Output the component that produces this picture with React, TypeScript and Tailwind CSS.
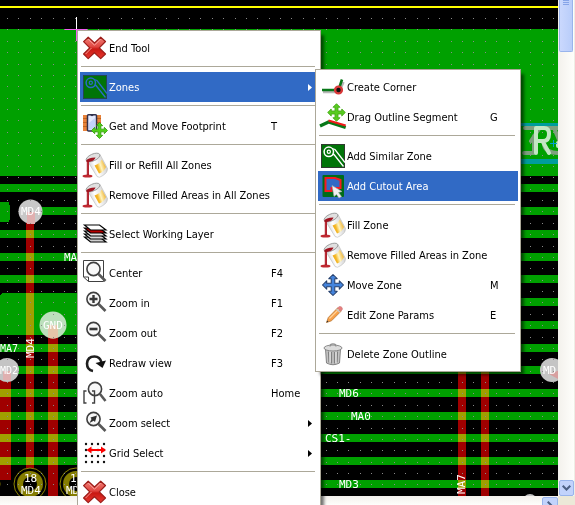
import type { ReactNode } from "react";

/* ---------- circuit board canvas ---------- */

const PITCH = 11.375;
const GREEN = "#00a000";
const RED = "#a00000";

function PadText({ x, y, size = 11, children, vertical = false, fill = "#fff" }: { x: number; y: number; size?: number; children: ReactNode; vertical?: boolean; fill?: string }) {
  return (
    <text x={x} y={y} fontSize={size} fill={fill} fontFamily="'DejaVu Sans Mono', monospace" transform={vertical ? `rotate(-90 ${x} ${y})` : undefined}>
      {children}
    </text>
  );
}

function Board() {
  const dots: ReactNode[] = [];
  for (let i = 0; i < 49; i++) {
    for (let j = 0; j < 43; j++) {
      dots.push(<rect key={`${i}-${j}`} x={Math.round(7 + i * PITCH)} y={Math.round(18 + j * PITCH)} width="1" height="1" />);
    }
  }
  const shared = [184, 230, 253, 275, 366, 389, 412, 434, 457];
  return (
    <svg className="block h-full w-full bg-black" aria-label="Circuit board" shapeRendering="crispEdges">
      <rect y="6" width="100%" height="2" fill="#ffff00" />
      <g fill={GREEN}>
        <rect y="29" width="100%" height="147" />
        {shared.map((y) => (
          <rect key={y} y={y} width="100%" height="8" />
        ))}
        <rect x="30" y="207" width="100%" height="8" />
        <path d="M0 202H9V205H10V220H9V222H0Z" />
        <path d="M2 293H300V335H0V295Z" />
        <rect y="344" width="100%" height="8" />
        <rect x="300" y="298" width="100%" height="8" />
        <rect x="300" y="321" width="100%" height="8" />
        <rect x="300" y="480" width="100%" height="8" />
      </g>
      <g fill={RED} className="mix-blend-screen">
        <rect x="26" y="212" width="8" height="258" />
        <rect x="48" y="325" width="10" height="171" />
        <rect x="0" y="370" width="11" height="110" />
        <rect x="458" y="340" width="8" height="156" />
        <rect x="481" y="340" width="8" height="156" />
      </g>
      <g shapeRendering="auto">
        {[-16, 30, 76].map((x) => (
          <g key={x}>
            <circle cx={x} cy="484" r="16" fill="#000" stroke="#8c8400" />
            <circle cx={x} cy="484" r="13" fill="#847c00" />
            <circle cx={x} cy="484" r="7" fill="#000" />
          </g>
        ))}
        <circle cx="30.500" cy="211.500" r="12" fill="#c8c8c8" />
        <rect x="27" y="212" width="8" height="12" fill="#e0b0b0" />
        <circle cx="53" cy="325" r="13.500" fill="#bcdfbc" />
        <path d="M48 325H58V337Q53 340 48 337Z" fill="#e5c5a8" />
        <circle cx="7" cy="370" r="12" fill="#c4c4c4" />
        <path d="M3 371H11V380H3Z" fill="#e0b0b0" />
        <circle cx="552" cy="370" r="12" fill="#c4c4c4" />
        <path d="M549 374L560 370V380Z" fill="#d8a0a0" />
        <circle cx="530" cy="501" r="7" fill="#c4c4c4" />
      </g>
      <g fill="#8a8a8a">{dots}</g>
      <rect x="500" y="123" width="100%" height="3" fill="#009c9c" />
      <rect x="500" y="159" width="100%" height="5" fill="#009c9c" />
      <g shapeRendering="auto" fill="none" strokeWidth="4" strokeLinecap="round" strokeLinejoin="round">
        <path d="M525 128H558M531 141L539 129M524 153H534V136M544 145Q546 153 558 153M554 128L560 142" stroke="#7fa07f" />
        <path d="M536 153V128H544Q549 128 549 134Q549 141 543 141H537M543 142L549 153" stroke="#c3e6c3" />
        <path d="M558 143V146" stroke="#c3e6c3" />
      </g>
      <path d="M550 143.500H557M553.500 140V147" stroke="#00a0d0" />
      <PadText x={21} y={215}>MD4</PadText>
      <PadText x={43} y={329}>GND</PadText>
      <PadText x={64} y={261}>MA7</PadText>
      <PadText x={0} y={352} size={10}>MA7</PadText>
      <PadText x={0} y={374} size={10}>MD2</PadText>
      <PadText x={34} y={358} vertical>MD4</PadText>
      <PadText x={24} y={482}>18</PadText>
      <PadText x={21} y={494}>MD4</PadText>
      <PadText x={70} y={482}>17</PadText>
      <PadText x={66} y={494}>MD5</PadText>
      <PadText x={339} y={397}>MD6</PadText>
      <PadText x={351} y={420}>MA0</PadText>
      <PadText x={325} y={442}>CS1-</PadText>
      <PadText x={339} y={488}>MD3</PadText>
      <PadText x={465} y={494} vertical>MA7</PadText>
      <PadText x={543} y={374}>MD</PadText>
      <path d="M76.500 17V29" stroke="#fff" />
      <path d="M65 29.500H87M76.500 29V41" stroke="#f060f0" />
    </svg>
  );
}

/* ---------- icons, all on a 24 x 24 grid ---------- */

function Icon({ children }: { children: ReactNode }) {
  return (
    <svg viewBox="0 0 24 24" className="size-6 shrink-0 overflow-visible" fill="none" aria-hidden="true">
      {children}
    </svg>
  );
}

function CrossIcon() {
  return (
    <Icon>
      <defs>
        <linearGradient id="cross" x1="0" y1="0" x2="0" y2="1">
          <stop offset="0" stopColor="#f08078" />
          <stop offset=".45" stopColor="#e0453f" />
          <stop offset=".55" stopColor="#c81812" />
          <stop offset="1" stopColor="#e83830" />
        </linearGradient>
      </defs>
      <path d="M5.200 1.200L11.500 7L17.700 1.200L22.500 5.500L16.300 11.800L22.500 18L17.700 22.600L11.400 16.700L5.200 22.600L.6 18L6.700 11.800L.6 5.600Z" fill="url(#cross)" stroke="#9c1c18" strokeWidth="1.200" strokeLinejoin="round" />
      <path d="M5.200 3L11.500 9.200L17.700 3M2.600 18L8.500 12" stroke="#ffb4ae" strokeWidth=".8" />
    </Icon>
  );
}

function ZoneIcon({ active = false }: { active?: boolean }) {
  const line = active ? "#2c6ac8" : "#fff";
  return (
    <Icon>
      <rect x=".5" y=".5" width="23" height="23" fill="#007408" stroke={active ? "#234850" : "#303a30"} />
      <path d="M11 4.500L14 5.500L24 18.500M11 10.500H13L22.500 22.500" stroke={line} strokeWidth="1.300" />
      <circle cx="7.800" cy="7.800" r="4.700" stroke={line} strokeWidth="1.500" />
      <circle cx="7.800" cy="7.800" r="1.600" stroke={line} strokeWidth="1.200" />
    </Icon>
  );
}

function FourWay({ cx, cy, s, fill, stroke }: { cx: number; cy: number; s: number; fill: string; stroke: string }) {
  return (
    <path
      transform={`translate(${cx} ${cy}) scale(${s})`}
      d="M0-10L4-6H1.700V-1.700H6V-4L10 0L6 4V1.700H1.700V6H4L0 10L-4 6H-1.700V1.700H-6V4L-10 0L-6-4V-1.700H-1.700V-6H-4Z"
      fill={fill}
      stroke={stroke}
      strokeWidth="1"
      strokeLinejoin="round"
    />
  );
}

function FootprintIcon() {
  return (
    <Icon>
      <path d="M0 1H5V17H0ZM13 1H18V12H13Z" fill="#e8823a" />
      <path d="M0 4.500H5M0 8.500H5M0 12.500H5M13 4.500H18M13 8.500H18" stroke="#c06420" />
      <rect x="4.500" y=".8" width="9" height="16.200" rx="1" fill="#e4eaff" stroke="#30304c" strokeWidth="1.500" />
      <path d="M7 .5Q9 4 11 .5Z" fill="#30304c" />
      <path d="M6 9L12 4V15.500H6Z" fill="#c4d2fa" />
      <FourWay cx={16.5} cy={16.5} s={0.8} fill="#4fd018" stroke="#2f9c08" />
    </Icon>
  );
}

function BucketIcon() {
  return (
    <Icon>
      <defs>
        <linearGradient id="bucket" x1="0" y1=".7" x2="1" y2=".3">
          <stop offset="0" stopColor="#b8b8b8" />
          <stop offset=".4" stopColor="#ffffff" />
          <stop offset="1" stopColor="#c8c8c8" />
        </linearGradient>
        <linearGradient id="label" x1="0" y1=".7" x2="1" y2=".3">
          <stop offset="0" stopColor="#eca818" />
          <stop offset=".3" stopColor="#f4b828" />
          <stop offset=".55" stopColor="#fff4c0" />
          <stop offset="1" stopColor="#eca818" />
        </linearGradient>
      </defs>
      <ellipse cx="4.500" cy="23" rx="5" ry="1.600" fill="#c02830" />
      <path d="M4.500 8L14 23.500Q16 25.500 20 22.500Q25 19.500 24.500 15.500L17 1.500Z" fill="url(#bucket)" stroke="#b8b8b8" strokeWidth=".6" />
      <path d="M11.500 12.500L16 20.500Q21 19 23 14L18.800 6.500Q16.500 11 11.500 12.500Z" fill="url(#label)" />
      <ellipse cx="10" cy="4.500" rx="7.400" ry="3.400" transform="rotate(-24 10 4.500)" fill="#e0e0e0" stroke="#909090" strokeWidth=".8" />
      <path d="M3 8Q4.500 4.500 12.500 4.500Q11.500 8 6 9V22H3.800V9Z" fill="#a01420" />
      <path d="M4.900 9V21.500" stroke="#d85058" strokeWidth=".7" />
    </Icon>
  );
}

function LayersIcon() {
  return (
    <Icon>
      {["#d0d0d0", "#d8d8d8", "#e0e0e0", "#b80000", "#fff"].map((fill, i) => (
        <path key={i} transform={`translate(0 ${12.5 - i * 3})`} d="M1.500 2.500H16.500L23 7.500H7.500Z" fill={fill} stroke="#000" strokeWidth="1.200" />
      ))}
    </Icon>
  );
}

function Lens({ cx = 10.5, children }: { cx?: number; children?: ReactNode }) {
  return (
    <>
      <path d={`M${cx + 5} 13L22.500 20`} stroke="#585858" strokeWidth="2.600" />
      <circle cx={cx} cy="8" r="6.600" fill="#f8f8f8" stroke="#404040" strokeWidth="1.600" />
      {children}
    </>
  );
}

function CenterIcon() {
  return (
    <Icon>
      <path d="M.5-.5H20.500V20.500H5.500L.5 16Z" stroke="#404040" />
      <path d="M.5 16H5.500V20.500" stroke="#404040" />
      <Lens />
    </Icon>
  );
}

function ZoomInIcon() {
  return (
    <Icon>
      <Lens>
        <path d="M6.500 8H14.500M10.500 4V12" stroke="#383838" strokeWidth="2.400" />
      </Lens>
    </Icon>
  );
}

function ZoomOutIcon() {
  return (
    <Icon>
      <Lens>
        <path d="M6.500 8H14.500" stroke="#383838" strokeWidth="2.600" />
      </Lens>
    </Icon>
  );
}

function RedrawIcon() {
  return (
    <Icon>
      <path d="M10 20Q4 19 4 12.500Q4.500 5.500 11.500 5.500Q17 5.500 18.500 11.500" stroke="#202020" strokeWidth="2.600" />
      <path d="M12.500 12L23 9.500L19.500 17Z" fill="#101010" />
    </Icon>
  );
}

function ZoomAutoIcon() {
  return (
    <Icon>
      <Lens cx={12} />
      <path d="M3.500 10H1V22H3.500M9 10H11.500V22H9" stroke="#404040" strokeWidth="1.400" />
    </Icon>
  );
}

function ZoomSelectIcon() {
  return (
    <Icon>
      <Lens>
        <path d="M6.500 12L8.500 8L7.500 6.500L14 4.500L12 11L10.700 9.800Z" fill="#303030" />
      </Lens>
    </Icon>
  );
}

function GridIcon() {
  return (
    <Icon>
      {[3, 9, 15, 21].map((y) => [3, 9, 15, 21].map((x) => <circle key={`${x}-${y}`} cx={x} cy={y} r="1.200" fill="#101010" />))}
      <path d="M7 9H20" stroke="#f00" strokeWidth="2" />
      <path d="M3.500 9L8.500 5.500V12.500ZM23 9L18 5.500V12.500Z" fill="#f00" />
    </Icon>
  );
}

function CornerIcon() {
  return (
    <Icon>
      <path d="M2 17H18L22.500 7" stroke="#b8b8b8" strokeWidth="2.500" />
      <path d="M1 15H17.500L21 4.500" stroke="#087818" strokeWidth="2.600" />
      <circle cx="17.500" cy="15" r="3.400" fill="#101010" stroke="#d83838" strokeWidth="2.400" />
    </Icon>
  );
}

function DragIcon() {
  return (
    <Icon>
      <FourWay cx={15.5} cy={7.5} s={0.88} fill="#58cc20" stroke="#48a818" />
      <path d="M-1 21L7.500 17L24.700 22.500" stroke="#087818" strokeWidth="3.400" />
      <path d="M7.500 15.500L24.700 20.500" stroke="#f01818" strokeWidth="2" />
    </Icon>
  );
}

function CutoutIcon() {
  return (
    <Icon>
      <rect x="1.500" y="1" width="21.500" height="22" rx="1" fill="#006c18" />
      <path d="M4.500 4H14L19.500 6V14H10.500V17H4.500Z" fill="#316ac5" stroke="#f81820" strokeWidth="2" />
      <path d="M11 11.500L21 17.500L17.500 18.500L20.500 22.500L18 24L15.500 20.500L13 22.500Z" fill="#f0f0f0" stroke="#a8a8a8" strokeWidth=".6" />
    </Icon>
  );
}

function MoveIcon() {
  return (
    <Icon>
      <FourWay cx={12} cy={12} s={1.05} fill="#4484dc" stroke="#26406c" />
    </Icon>
  );
}

function PencilIcon() {
  return (
    <Icon>
      <path d="M5.500 19.500L7.300 14.500L16.500 5L20 8.300L10.500 17.800Z" fill="#f8a048" stroke="#b87838" strokeWidth=".8" />
      <path d="M8.500 15.500L17.800 6.200" stroke="#ffd49c" strokeWidth="1.200" />
      <path d="M16.500 5L18.500 3.500Q21 3 21.500 6L20 8.300Z" fill="#e88080" stroke="#c87070" strokeWidth=".6" />
      <path d="M15.500 6L19 9.300" stroke="#c8c8c8" strokeWidth="1.400" />
      <path d="M5.500 19.500L6.200 17.500L7.500 18.800Z" fill="#303030" />
    </Icon>
  );
}

function TrashIcon() {
  return (
    <Icon>
      <path d="M4.500 7H19.500L18.500 21Q12 24.500 5.500 21Z" fill="#c4c4c4" stroke="#787878" strokeWidth=".9" />
      <path d="M7.500 9.500L8 20.500M10.500 10V21.500M13.500 10V21.500M16.500 9.500L16 20.500" stroke="#808080" strokeWidth="1.300" />
      <path d="M9 9.500V20.500M15 10V21" stroke="#f0f0f0" />
      <ellipse cx="12" cy="6" rx="9" ry="3" fill="#dcdcdc" stroke="#808080" strokeWidth=".9" />
      <path d="M9 4.500Q9 1.800 12 1.800T15 4.500" stroke="#909090" strokeWidth="1.300" />
    </Icon>
  );
}

/* ---------- menus ---------- */

type Entry = "separator" | { label: string; icon: ReactNode; keys?: string; submenu?: boolean; active?: boolean };

const mainMenu: Entry[] = [
  { label: "End Tool", icon: <CrossIcon /> },
  "separator",
  { label: "Zones", icon: <ZoneIcon active />, submenu: true, active: true },
  "separator",
  { label: "Get and Move Footprint", icon: <FootprintIcon />, keys: "T" },
  "separator",
  { label: "Fill or Refill All Zones", icon: <BucketIcon /> },
  { label: "Remove Filled Areas in All Zones", icon: <BucketIcon /> },
  "separator",
  { label: "Select Working Layer", icon: <LayersIcon /> },
  "separator",
  { label: "Center", icon: <CenterIcon />, keys: "F4" },
  { label: "Zoom in", icon: <ZoomInIcon />, keys: "F1" },
  { label: "Zoom out", icon: <ZoomOutIcon />, keys: "F2" },
  { label: "Redraw view", icon: <RedrawIcon />, keys: "F3" },
  { label: "Zoom auto", icon: <ZoomAutoIcon />, keys: "Home" },
  { label: "Zoom select", icon: <ZoomSelectIcon />, submenu: true },
  { label: "Grid Select", icon: <GridIcon />, submenu: true },
  "separator",
  { label: "Close", icon: <CrossIcon /> },
];

const zoneMenu: Entry[] = [
  { label: "Create Corner", icon: <CornerIcon /> },
  { label: "Drag Outline Segment", icon: <DragIcon />, keys: "G" },
  "separator",
  { label: "Add Similar Zone", icon: <ZoneIcon /> },
  { label: "Add Cutout Area", icon: <CutoutIcon />, active: true },
  "separator",
  { label: "Fill Zone", icon: <BucketIcon /> },
  { label: "Remove Filled Areas in Zone", icon: <BucketIcon /> },
  { label: "Move Zone", icon: <MoveIcon />, keys: "M" },
  { label: "Edit Zone Params", icon: <PencilIcon />, keys: "E" },
  "separator",
  { label: "Delete Zone Outline", icon: <TrashIcon /> },
];

function Menu({ entries, label, className, keysClass }: { entries: Entry[]; label: string; className: string; keysClass: string }) {
  return (
    <div role="menu" aria-label={label} className={`absolute border border-[#aca899] bg-white p-0.5 shadow-[4px_4px_3px_-1px_rgba(0,0,0,0.55)] ${className}`}>
      {entries.map((entry, i) =>
        entry === "separator" ? (
          <div key={i} role="separator" className="ml-px mr-[3px] h-[9px] pt-[3px]">
            <div className="h-px bg-[#aca899]" />
          </div>
        ) : (
          <button key={i} type="button" role="menuitem" className={`flex h-[30px] w-full items-center gap-0.5 pl-[3px] text-left ${entry.active ? "bg-[#316ac5] text-white" : "text-black"}`}>
            {entry.icon}
            <span className="flex-1 whitespace-nowrap pt-0.5">{entry.label}</span>
            {entry.keys && <span className={`pt-0.5 ${keysClass}`}>{entry.keys}</span>}
            {entry.submenu && (
              <svg viewBox="0 0 4 7" className="mr-1.5 h-[7px] w-1" fill="currentColor" aria-hidden="true">
                <path d="M0 0L4 3.500L0 7Z" />
              </svg>
            )}
          </button>
        ),
      )}
    </div>
  );
}

/* ---------- scroll bars ---------- */

const buttonLook = "flex shrink-0 items-center justify-center rounded-xs border border-[#98b4ec] bg-[#c2d3fc]";

export default function App() {
  return (
    <div className="relative flex h-screen flex-col overflow-hidden bg-[#ece9d8] font-['DejaVu_Sans_Condensed','DejaVu_Sans',sans-serif] text-[11px] leading-4">
      <div className="flex min-h-0 flex-1">
        <main className="min-w-0 flex-1 overflow-hidden">
          <Board />
        </main>
        <div className="flex w-[17px] shrink-0 flex-col items-center justify-between border-r border-[#eeede5] bg-linear-to-r from-[#f3f1ec] to-[#fefefb]">
          <button type="button" aria-label="Vertical scroll position" className="flex h-[52px] w-[14px] justify-center rounded-b-xs border border-t-0 border-[#98b4ec] bg-linear-to-r from-[#cad8fd] to-[#b9cdfa]">
            <svg viewBox="0 0 6 6" className="size-1.5" stroke="#86a4e8" aria-hidden="true">
              <path d="M0 .5H6M0 2.500H6M0 4.500H6" />
            </svg>
          </button>
          <button type="button" aria-label="Scroll down" className={`${buttonLook} h-4 w-[15px]`}>
            <svg viewBox="0 0 9 6" className="h-1.5 w-[9px]" fill="none" stroke="#4d6185" strokeWidth="2" aria-hidden="true">
              <path d="M.7 .7L4.500 4.500L8.300 .7" />
            </svg>
          </button>
        </div>
      </div>
      <div className="flex h-[9px] shrink-0">
        <div className="flex flex-1 justify-end overflow-hidden bg-linear-to-b from-[#f3f1ec] to-[#fefefb] pt-px">
          <button type="button" aria-label="Scroll right" className={`${buttonLook} h-4 w-4`}>
            <svg viewBox="0 0 6 9" className="h-[9px] w-1.5" fill="none" stroke="#4d6185" strokeWidth="2" aria-hidden="true">
              <path d="M.7 .7L4.500 4.500L.7 8.300" />
            </svg>
          </button>
        </div>
        <div className="w-[17px] shrink-0" />
      </div>
      <Menu entries={mainMenu} label="Board" className="left-[77px] top-[30px] w-[244px]" keysClass="w-[47px]" />
      <Menu entries={zoneMenu} label="Zones" className="left-[315px] top-[69px] w-[206px]" keysClass="w-7" />
    </div>
  );
}
